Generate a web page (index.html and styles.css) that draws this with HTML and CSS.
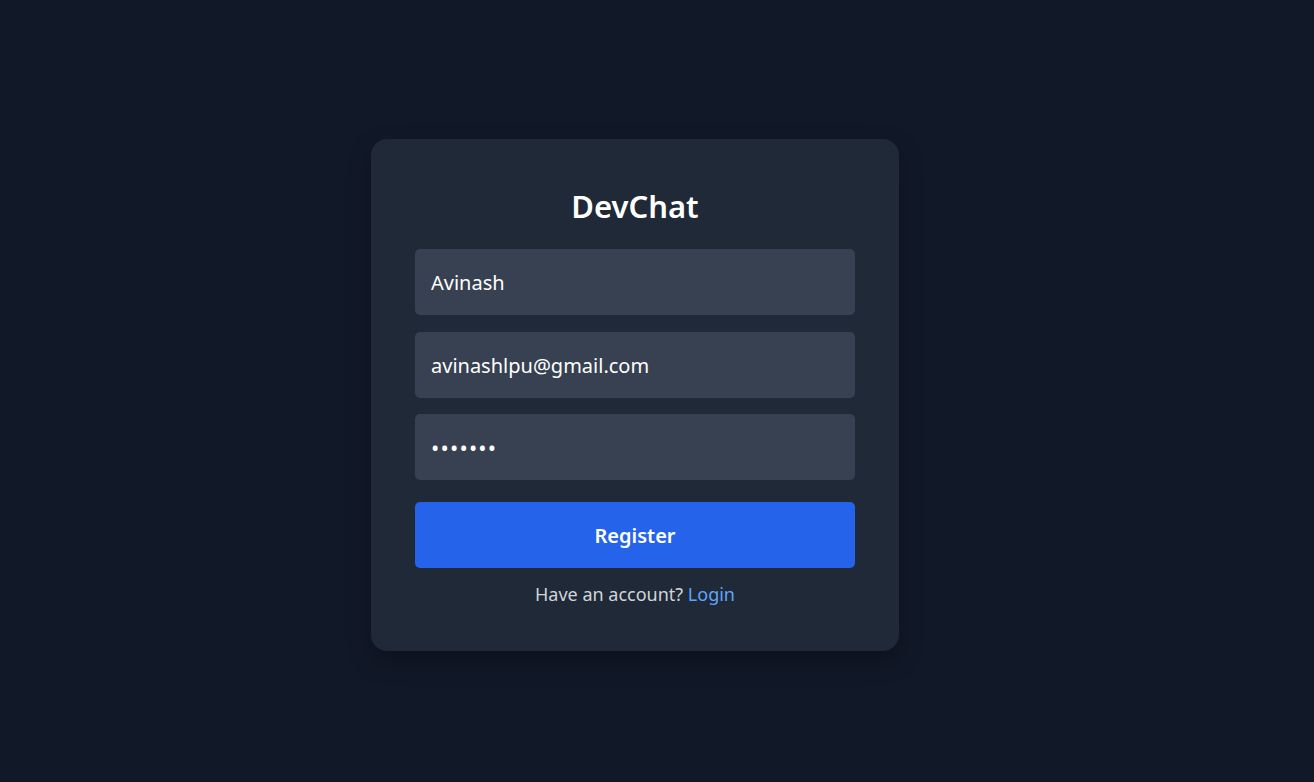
FILE: index.html
```html
<!DOCTYPE html>
<html>
<head>
<meta charset="utf-8">
<link rel="stylesheet" href="styles.css">
</head>
<body>
<main class="page">
  <form class="card">
    <h1 class="title">DevChat</h1>
    <input class="field" type="text" value="Avinash">
    <input class="field" type="email" value="avinashlpu@gmail.com">
    <input class="field field-pass" type="password" value="1234567">
    <button class="btn" type="button">Register</button>
    <p class="alt">Have an account? <a class="link" href="#">Login</a></p>
  </form>
</main>
</body>
</html>
```

FILE: styles.css
```css
* { box-sizing: border-box; }
html, body { margin: 0; height: 100%; }
body {
  background: #111827;
  font-family: "Noto Sans", "Open Sans", sans-serif;
  color: #fff;
}
.page {
  min-height: 100vh;
  display: flex;
  align-items: center;
  justify-content: center;
  padding: 8px 44px 0 0;
}
.card {
  width: 528px;
  background: #1f2937;
  border-radius: 16px;
  padding: 47px 44px 45px;
  display: flex;
  flex-direction: column;
  box-shadow: 0 10px 25px rgba(0,0,0,0.25);
}
.title {
  margin: 0 0 23px;
  text-align: center;
  font-size: 31px;
  line-height: 40px;
  font-weight: 600;
  color: #fff;
}
.field {
  display: block;
  width: 100%;
  height: 66px;
  margin: 0 0 16px;
  padding: 0 16px;
  border: none;
  border-radius: 5px;
  background: #374151;
  color: #fff;
  font-family: inherit;
  font-size: 20px;
  outline: none;
}
.field[type=text] { margin-bottom: 17px; }
.field-pass {
  margin-bottom: 22px;
  font-size: 22px;
  letter-spacing: 1.2px;
}
.btn {
  height: 66px;
  width: 100%;
  border: none;
  border-radius: 5px;
  background: #2563eb;
  color: #fff;
  font-family: inherit;
  font-size: 20px;
  font-weight: 600;
}
.alt {
  margin: 14px 0 0;
  text-align: center;
  font-size: 18px;
  line-height: 24px;
  color: #d1d5db;
}
.link { color: #60a5fa; text-decoration: none; }
```
